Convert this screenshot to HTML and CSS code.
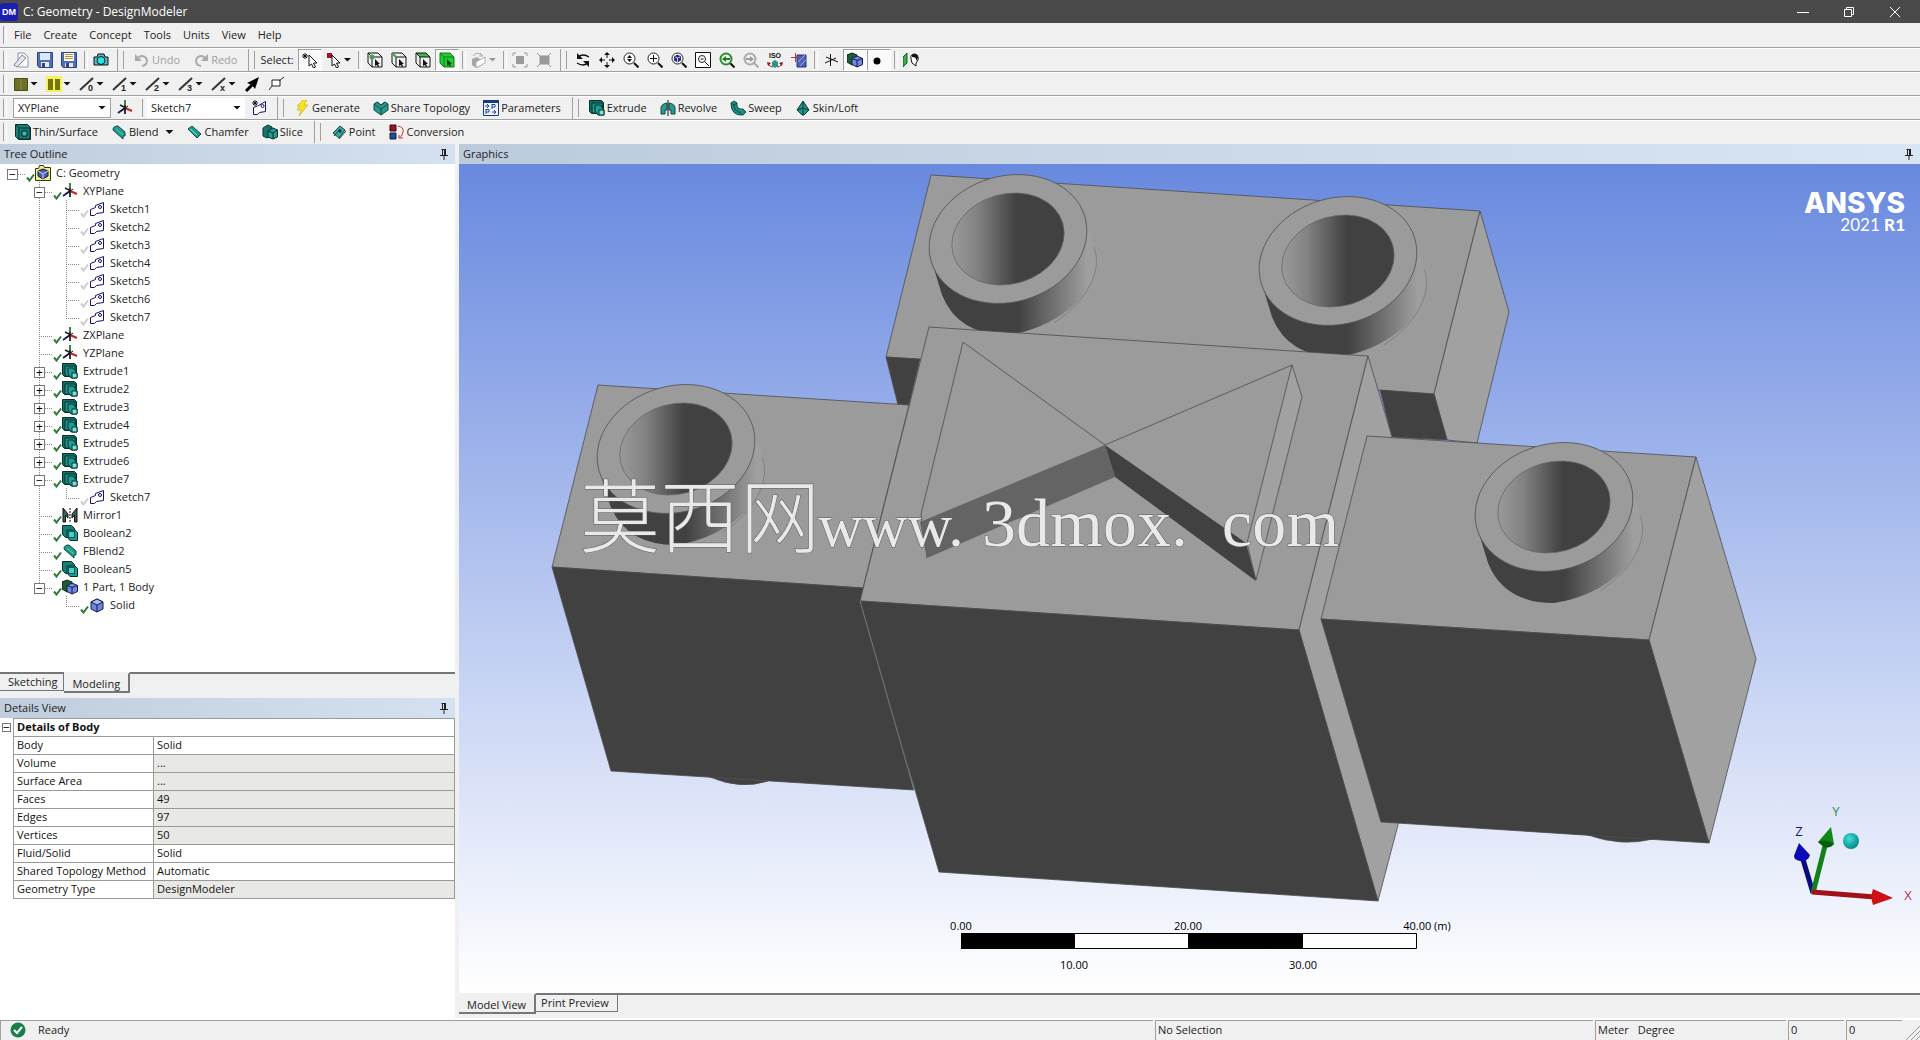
FILE: index.html
```html
<!DOCTYPE html>
<html lang="en">
<head>
<meta charset="utf-8">
<title>C: Geometry - DesignModeler</title>
<link rel="stylesheet" href="styles.css">
</head>
<body>
<svg class="defs" width="0" height="0" aria-hidden="true">
  <defs>
    <symbol id="pin" viewBox="0 0 8 12"><path d="M2.500 1v6M1.500 1.500h4M5 1v6M0 7.500h8M4 8v4" fill="none" stroke="#222"/><path d="M5 1v6" stroke="#222" stroke-width="2"/></symbol>
    <symbol id="check" viewBox="0 0 9 9"><path d="M1 4.500 3.500 7.500 8 1.500" fill="none" stroke="currentColor" stroke-width="2"/></symbol>
    <symbol id="new" viewBox="0 0 16 16"><path d="M5 1h6l4 4v10H5z" fill="#fff" stroke="#8a93a8"/><path d="M1 13 9 3l4 3-9 9z" fill="#e3e5ea" stroke="#7d8494"/></symbol>
    <symbol id="save" viewBox="0 0 16 16"><path d="M.5.5h15v15H2l-1.500-2z" fill="#4f6fb5" stroke="#2d4680"/><path d="M3 1h10v7H3z" fill="#dce7fb"/><path d="M4 10h8v5H4z" fill="#e8e8e8"/><path d="M5 11h3v4H5z" fill="#2d4680"/></symbol>
    <symbol id="saveas" viewBox="0 0 16 16"><path d="M.5.5h15v15H2l-1.500-2z" fill="#4f6fb5" stroke="#2d4680"/><path d="M3 1h10v8H3z" fill="#fff"/><path d="M4 2.500h8M4 4.500h8M4 6.500h8" stroke="#c58a2c"/><path d="M4 11h8v4H4z" fill="#e8e8e8"/><path d="M5 11h3v4H5z" fill="#2d4680"/></symbol>
    <symbol id="camera" viewBox="0 0 16 16"><path d="M1 5h3l1-3h6l1 3h3v8H1z" fill="#5ab8be" stroke="#111"/><circle cx="8" cy="8.500" r="4" fill="#20e6ec" stroke="#111"/></symbol>
    <symbol id="undo" viewBox="0 0 16 16"><path d="M4 6a5 5 0 1 1 4 8" fill="none" stroke="#aaa" stroke-width="2"/><path d="M1 2v7h7z" fill="#aaa"/></symbol>
    <symbol id="redo" viewBox="0 0 16 16"><path d="M12 6a5 5 0 1 0-4 8" fill="none" stroke="#aaa" stroke-width="2"/><path d="M15 2v7H8z" fill="#aaa"/></symbol>
    <symbol id="arrow" viewBox="0 0 16 16"><path d="M7 3v11l2.500-2 2 4 2-1-2-4H15z" fill="#fff" stroke="#111"/></symbol>
    <symbol id="pick" viewBox="0 0 16 16"><path d="M3 1v6M0 4h6M1 2l4 4M5 2 1 6" stroke="#111"/><use href="#arrow"/></symbol>
    <symbol id="pickbox" viewBox="0 0 16 16"><path d="M1 1h5v5H1z" fill="#a01228"/><use href="#arrow" x="-1"/></symbol>
    <symbol id="cubelines" viewBox="0 0 16 16"><path d="M1 1h10l4 4v10H5L1 11zM1 1l4 4h10M5 5v10" fill="none" stroke="#111"/><path d="M8 7v7l2-1 1 2 1-1-1-2h2z" fill="#111"/></symbol>
    <symbol id="selv" viewBox="0 0 16 16"><use href="#cubelines"/><circle cx="5" cy="5" r="2.500" fill="#4a9c4e"/></symbol>
    <symbol id="sele" viewBox="0 0 16 16"><use href="#cubelines"/><path d="m1 1 4 4" stroke="#3da447" stroke-width="2"/></symbol>
    <symbol id="self" viewBox="0 0 16 16"><path d="M1 1h10l4 4H5z" fill="#3fbb4c"/><use href="#cubelines"/></symbol>
    <symbol id="selb" viewBox="0 0 16 16"><path d="M1 1h10l4 4v10H5L1 11z" fill="#22cc36"/><path d="M1 1h10l4 4v10H5L1 11zM1 1l4 4h10M5 5v10" fill="none" stroke="#117a1c"/><path d="M8 7v7l2-1 1 2 1-1-1-2h2z" fill="#093f0d"/></symbol>
    <symbol id="extend" viewBox="0 0 16 16"><path d="m1 7 5-2 4 3v6l-5 2-4-3z" fill="#a5a5a5"/><path d="m5 10 9-5v6l-9 5z" fill="#fff" stroke="#aaa"/><path d="M2 4q4-5 9-1M9 1l3 3H8" fill="none" stroke="#aaa"/></symbol>
    <symbol id="grow" viewBox="0 0 16 16"><path d="M4 4h8v8H4z" fill="#999"/><path d="M1 4V1h3M12 1h3v3M15 12v3h-3M4 15H1v-3" fill="none" stroke="#999"/></symbol>
    <symbol id="shrink" viewBox="0 0 16 16"><path d="M4 4h9v8H4zM1 1l4 4M15 1l-4 4M15 15l-4-4M1 15l4-4" fill="#999" stroke="#999"/></symbol>
    <symbol id="rotate" viewBox="0 0 16 16"><path d="M3 5q5-4 11 0M13 11q-5 4-11 0" fill="none" stroke="#111" stroke-width="1.500"/><path d="M2 1v6h6zM14 15V9H8z" fill="#111"/></symbol>
    <symbol id="pan" viewBox="0 0 16 16"><path d="M8 2v4M8 10v4M2 8h4M10 8h4" stroke="#111"/><path d="m8 0 3 3H5zM8 16l3-3H5zM0 8l3-3v6zM16 8l-3-3v6z" fill="#111"/></symbol>
    <symbol id="lens" viewBox="0 0 16 16"><circle cx="6.500" cy="6.500" r="5.500" fill="#fff" stroke="#222"/><path d="m11 11 4.500 4.500" stroke="#111" stroke-width="2"/></symbol>
    <symbol id="zoom" viewBox="0 0 16 16"><use href="#lens"/><path d="m6.500 3 2.500 3h-5zM6.500 10l2.500-3h-5z" fill="#111"/></symbol>
    <symbol id="zoombox" viewBox="0 0 16 16"><use href="#lens"/><path d="M6.500 3v7M3 6.500h7" stroke="#111"/></symbol>
    <symbol id="zoomfit" viewBox="0 0 16 16"><use href="#lens"/><path d="m6.500 2.500 3.500 2v4l-3.500 2-3.500-2v-4z" fill="#2a2a8c"/><path d="m4 5 2.500 1L9 5M6.500 6v4" stroke="#b6c4ff" fill="none"/></symbol>
    <symbol id="magn" viewBox="0 0 16 16"><path d="M.5.5h15v15H.5z" fill="#fff" stroke="#111"/><circle cx="7" cy="7" r="3.500" fill="none" stroke="#222"/><path d="m10 10 4 4M5.500 7h3" stroke="#111"/></symbol>
    <symbol id="prev" viewBox="0 0 16 16"><path d="m11 11 4.500 4.500" stroke="#111" stroke-width="2"/><circle cx="7" cy="7" r="5.500" fill="#f2fff0" stroke="#2d8a2f" stroke-width="2"/><path d="m3 7 4-3v2h4v2H7v2z" fill="#1e7a22"/></symbol>
    <symbol id="next" viewBox="0 0 16 16"><circle cx="7" cy="7" r="5.500" fill="none" stroke="#aaa" stroke-width="2"/><path d="m11 11 4.500 4.500" stroke="#aaa" stroke-width="2"/><path d="m11 7-4-3v2H3v2h4v2z" fill="#999"/></symbol>
    <symbol id="iso" viewBox="0 0 16 16"><path d="m5 10 3-2 3 2v4l-3 2-3-2z" fill="#1f9a8a"/><path d="M1 12q2 3 5 3M15 12q-2 3-5 3" stroke="#b03030" fill="none"/><path d="m0 10 4 1-3 3zM16 10l-4 1 3 3z" fill="#7b2020"/></symbol>
    <symbol id="lookat" viewBox="0 0 16 16"><path d="M6 3h9v12H6z" fill="#4f65bb" stroke="#253070"/><path d="m7 10 7-7M9 14l6-6" stroke="#9aabec"/><path d="M0 5.500h11M4.500 1v9" stroke="#a03b54"/></symbol>
    <symbol id="plainaxes" viewBox="0 0 16 16"><path d="M7.500 2v12M2 11l11-5M3 5l12 5" stroke="#111"/></symbol>
    <symbol id="plane" viewBox="0 0 16 16"><path d="M8 3v11M3 5l6 3" stroke="#222" stroke-width="1.500"/><path d="M8 0v5" stroke="#3a8a3d" stroke-width="2"/><path d="m1 13 7-5" stroke="#1d1d66" stroke-width="2"/><path d="m8 8 7 3" stroke="#b82a2a" stroke-width="2"/><path d="M8 5v9M4 11l7-5" stroke="#111"/></symbol>
    <symbol id="body" viewBox="0 0 16 16"><path d="m8 2 6 3v7l-6 3-6-3V5z" fill="#6f86dd" stroke="#111b4a"/><path d="m8 2 6 3-6 3-6-3z" fill="#a9b9f7" stroke="#111b4a"/><path d="M8 8v7" stroke="#111b4a"/></symbol>
    <symbol id="parts" viewBox="0 0 16 16"><path d="m0 3 5-2 5 2v7l-5 3-5-3z" fill="#1f5c33" stroke="#0b2413"/><path d="m10 4 5.500 2.500v6L10 15l-5-2.500v-6z" fill="#7189e0" stroke="#111b4a"/><path d="m5 6.500 5 2 5.500-2M10 8.500V15" fill="none" stroke="#111b4a"/></symbol>
    <symbol id="dot" viewBox="0 0 16 16"><circle cx="6" cy="9" r="3.500" fill="#000"/></symbol>
    <symbol id="mate" viewBox="0 0 16 16"><path d="m0 5 4-4v10l-4 4z" fill="#3cab48" stroke="#155c1d"/><path d="M8 6q-1-4 4-4 4 1 3 6l-2 3v3l-4-3-1-4z" fill="#fff" stroke="#111"/><path d="M9 3q5-3 6 3l-2 3q1-4-4-4z" fill="#111"/></symbol>
    <symbol id="facecolor" viewBox="0 0 16 16"><path d="M1.500 2.500h13v12h-13z" fill="#6d7028" stroke="#4b4d18"/><path d="M8 3v11" stroke="#8d9048"/></symbol>
    <symbol id="edgecolor" viewBox="0 0 16 16"><path d="M0 0h16v16H0z" fill="#f6f25a"/><path d="M2 3h5v11H2zM9 3h5v11H9z" fill="#77760d"/></symbol>
    <symbol id="slash" viewBox="0 0 16 16"><path d="M1 14 14 2" stroke="#333" stroke-width="2"/></symbol>
    <symbol id="thick" viewBox="0 0 16 16"><path d="m2 15 7-7" stroke="#000" stroke-width="3"/><path d="M15 1 11 13 8 9 3 7z" fill="#000"/></symbol>
    <symbol id="vertex" viewBox="0 0 16 16"><path d="M4 4h8v6H4z" fill="#fff" stroke="#222"/><path d="m11 5 5-4M1 14l3-4" stroke="#222"/></symbol>
    <symbol id="sketch" viewBox="0 0 16 16"><path d="M1.500 14.500v-6l5-2V4.500l8-3v10l-7 1-2 2z" fill="#fff" stroke="#14146e"/><circle cx="11" cy="6" r="1.500" fill="none" stroke="#14146e"/></symbol>
    <symbol id="newsketch" viewBox="0 0 16 16"><path d="M2.500 14.500v-7l5-2 7-4v10l-6 1-2 2z" fill="#fff" stroke="#14146e"/><circle cx="11.500" cy="6" r="1.500" fill="none" stroke="#14146e"/><path d="M4 0v6M1 3h6M2 1l4 4M6 1 2 5" stroke="#111"/></symbol>
    <symbol id="bolt" viewBox="0 0 16 16"><path d="M9 0h4l-3 5h4L5 16l2-6H3l3-4H3z" fill="#f7e51b" stroke="#b59b08" stroke-width=".5"/></symbol>
    <symbol id="share" viewBox="0 0 16 16"><path d="m1 4 3-2 4 3 4-3 3 2v6l-7 5-7-5z" fill="#2b9a8d" stroke="#0c4a42"/><path d="m1 4 7 5 7-5M8 9v6M4 2l4 3 4-3" fill="none" stroke="#0c4a42"/></symbol>
    <symbol id="params" viewBox="0 0 16 16"><path d="M.5.500h15v15H.5z" fill="#eef3ff" stroke="#173a7a"/><path d="M0 0h16v3H0z" fill="#173a7a"/><path d="M2 6h4M4 4l2 2-2 2M9 4v5M9 4.500h3v2.500H9M3 9v5M3 9.500h3v2.500H3M9 12h4M11 10l2 2-2 2" fill="none" stroke="#1b4696"/></symbol>
    <symbol id="extrude" viewBox="0 0 16 16"><path d="M.5.500h12l2 2v11h-12l-2-2z" fill="#136e66" stroke="#06312d"/><path d="M3 3h10v10H3z" fill="#25938a" stroke="#06312d"/><path d="M6 5h5l4 5v5H9l-3-4z" fill="#1f9e98" stroke="#06312d"/><path d="M10 10h5v5h-5z" fill="#7fdcd6" stroke="#06312d"/></symbol>
    <symbol id="boolean" viewBox="0 0 16 16"><path d="M.5.500h9l3 3v9h-9l-3-3z" fill="#167e74" stroke="#06312d"/><path d="M5 5h8l2.500 2.500v8H8L5 12z" fill="#1e9a90" stroke="#06312d"/><path d="M6.500 6.500h6v6h-6z" fill="#49cfc8" stroke="#0b524b"/></symbol>
    <symbol id="revolve" viewBox="0 0 16 16"><path d="M1 8q0-4 6-5v7H5v4H1zM15 8q0-4-6-5v7h2v4h4z" fill="#2b9a8d" stroke="#0c4a42"/><path d="M8 0v16" stroke="#111"/></symbol>
    <symbol id="sweep" viewBox="0 0 16 16"><path d="M1 3 4 1l3 2q-1 7 6 6l3 3-3 3Q1 16 1 3z" fill="#1d8f82" stroke="#0c4a42"/><path d="m1 3 3 2 3-2M4 5q0 6 7 8" fill="none" stroke="#0c4a42"/></symbol>
    <symbol id="skin" viewBox="0 0 16 16"><path d="m8 1 6 9-5 5H7l-5-5z" fill="#25938a" stroke="#0c3c36"/><path d="m2 10 6-2 6 2M8 1v14" fill="none" stroke="#0c3c36"/></symbol>
    <symbol id="thin" viewBox="0 0 16 16"><path d="M.5.500h12l3 3v12h-12l-3-3z" fill="#1b7d75" stroke="#06312d"/><path d="M4 4h11v11H4zM7 7h5v5H7zM1 1l3 3" fill="none" stroke="#06312d"/><path d="M7 7h5v5H7z" fill="#3fb9b0" stroke="#06312d"/></symbol>
    <symbol id="blend" viewBox="0 0 16 16"><path d="M2 6q0-4 5-4l7 6v4h-2v3z" fill="#1f9c8d" stroke="#0c4a42"/><path d="m5 5 7 6" stroke="#5ccabd"/></symbol>
    <symbol id="chamfer" viewBox="0 0 16 16"><path d="m2 5 4-3 9 8-4 4z" fill="#1f9c8d" stroke="#0c4a42"/><path d="m4 5 7 6" stroke="#8ce0d6"/></symbol>
    <symbol id="slice" viewBox="0 0 16 16"><path d="m1 4 5-3 4 2v8l-5 3-4-2z" fill="#15756b" stroke="#06312d"/><path d="m6 7 5-3 4.500 2v7L11 15l-5-2z" fill="#2b9a8d" stroke="#06312d"/><path d="m6 7 5 2 4.500-3M11 9v6" fill="none" stroke="#06312d"/></symbol>
    <symbol id="point" viewBox="0 0 16 16"><path d="m2 9 7-7 5 4-6 8z" fill="#38a99c" stroke="#0c4a42"/><path d="m3 12 6-7M8 15l7-8" stroke="#133c55"/><circle cx="9" cy="7" r="1.500" fill="#123"/></symbol>
    <symbol id="convert" viewBox="0 0 16 16"><path d="M1 1h6v6H1z" fill="#8f1526" stroke="#3f0710"/><path d="M1 9h6v6H1z" fill="#1d4f8c" stroke="#0a2444"/><path d="M9 2q6 1 5 6-1 5-4 6M10 11v3h4" fill="none" stroke="#c33a3a"/></symbol>
    <symbol id="root" viewBox="0 0 16 16"><path d="M.5 3.500h3l1-3h4l1 2h6v13H.5z" fill="#f1ec8c" stroke="#35330d"/><path d="m8 4 5 2v5l-5 3-5-3V6z" fill="#4960a8" stroke="#0e163c"/><path d="m3 6 5 3 5-3M8 9v5" stroke="#c7d4ff" fill="none"/></symbol>
    <symbol id="mirror" viewBox="0 0 16 16"><path d="M1 15V1l5 6v4L3.500 8v7zM15 15V1l-5 6v4l2.500-3v7z" fill="#3f5f52" stroke="#111"/><path d="M8 1v14" stroke="#111" stroke-dasharray="2 1"/></symbol>
    <linearGradient id="sky" x1="0" y1="0" x2="0" y2="1"><stop offset="0" stop-color="#6889df"/><stop offset=".5" stop-color="#b5c5f0"/><stop offset="1" stop-color="#fff"/></linearGradient>
    <linearGradient id="wall" gradientUnits="userSpaceOnUse" x1="10" y1="0" x2="80" y2="0"><stop offset="0" stop-color="#414141"/><stop offset="1" stop-color="#9f9f9f"/></linearGradient>
    <linearGradient id="bore" gradientUnits="userSpaceOnUse" x1="-56" y1="0" x2="8" y2="0" gradientTransform="rotate(16)"><stop offset="0" stop-color="#9a9a9a"/><stop offset=".4" stop-color="#828282"/><stop offset="1" stop-color="#414141"/></linearGradient>
    <radialGradient id="ball" cx=".4" cy=".35" r=".65"><stop offset="0" stop-color="#3fe0d8"/><stop offset="1" stop-color="#058a86"/></radialGradient>
    <g id="boss">
      <path d="M-76 23 76-23 87 10Q92 40 68 64 40 90 0 96-50 96-66 56z" fill="url(#wall)"/>
      <path d="M86 8Q92 24 84 42 74 66 46 84" fill="none" stroke="#777" stroke-width=".7"/>
      <ellipse rx="80" ry="63" transform="rotate(-16)" fill="#9b9b9b" stroke="#555" stroke-width=".8"/>
      <ellipse rx="57" ry="45" transform="rotate(-16)" fill="url(#bore)" stroke="#666" stroke-width=".7"/>
    </g>
  </defs>
</svg>

<header class="titlebar">
  <svg class="logo" viewBox="0 0 18 18"><rect width="18" height="18" rx="3" fill="#1b1fae"/><text x="9" y="12" text-anchor="middle" class="logo-text">DM</text></svg>
  <h1>C: Geometry - DesignModeler</h1>
  <button class="win" aria-label="Minimize"><svg viewBox="0 0 12 12"><path d="M0 6.500h12" stroke="#fff"/></svg></button>
  <button class="win" aria-label="Restore"><svg viewBox="0 0 12 12"><path d="M1.500 3.500h7v7h-7zM3.500 3V1.500h7v7H9" fill="none" stroke="#fff"/></svg></button>
  <button class="win" aria-label="Close"><svg viewBox="0 0 12 12"><path d="m1 1 10 10M11 1 1 11" stroke="#fff"/></svg></button>
</header>

<nav class="bar menu">
  <span class="grip"></span>
  <button>File</button><button>Create</button><button>Concept</button><button>Tools</button><button>Units</button><button>View</button><button>Help</button>
</nav>

<div class="bar" role="toolbar" aria-label="Standard">
  <span class="grip"></span>
  <button class="ic" aria-label="New"><svg><use href="#new"/></svg></button>
  <button class="ic" aria-label="Save"><svg><use href="#save"/></svg></button>
  <button class="ic" aria-label="Save as"><svg><use href="#saveas"/></svg></button>
  <span class="sep"></span>
  <button class="ic" aria-label="Capture"><svg><use href="#camera"/></svg></button>
  <span class="band"></span>
  <button class="lb" disabled><svg><use href="#undo"/></svg>Undo</button>
  <button class="lb" disabled><svg><use href="#redo"/></svg>Redo</button>
  <span class="band"></span>
  <span class="caption">Select:</span>
  <button class="ic on" aria-label="New selection"><svg><use href="#pick"/></svg></button>
  <button class="ic drop" aria-label="Select mode"><svg><use href="#pickbox"/></svg></button>
  <span class="sep"></span>
  <button class="ic" aria-label="Points"><svg><use href="#selv"/></svg></button>
  <button class="ic" aria-label="Edges"><svg><use href="#sele"/></svg></button>
  <button class="ic" aria-label="Faces"><svg><use href="#self"/></svg></button>
  <button class="ic on" aria-label="Bodies"><svg><use href="#selb"/></svg></button>
  <span class="sep"></span>
  <button class="ic drop" disabled aria-label="Extend selection"><svg><use href="#extend"/></svg></button>
  <span class="sep"></span>
  <button class="ic" disabled aria-label="Expand"><svg><use href="#grow"/></svg></button>
  <button class="ic" disabled aria-label="Shrink"><svg><use href="#shrink"/></svg></button>
  <span class="band"></span>
  <button class="ic" aria-label="Rotate"><svg><use href="#rotate"/></svg></button>
  <button class="ic" aria-label="Pan"><svg><use href="#pan"/></svg></button>
  <button class="ic" aria-label="Zoom"><svg><use href="#zoom"/></svg></button>
  <button class="ic" aria-label="Box zoom"><svg><use href="#zoombox"/></svg></button>
  <button class="ic" aria-label="Zoom to fit"><svg><use href="#zoomfit"/></svg></button>
  <button class="ic" aria-label="Magnifier"><svg><use href="#magn"/></svg></button>
  <button class="ic" aria-label="Previous view"><svg><use href="#prev"/></svg></button>
  <button class="ic" disabled aria-label="Next view"><svg><use href="#next"/></svg></button>
  <button class="ic" aria-label="Isometric view"><svg viewBox="0 0 16 16"><text x="8" y="6" text-anchor="middle" class="iso-text">ISO</text><use href="#iso"/></svg></button>
  <button class="ic" aria-label="Look at"><svg><use href="#lookat"/></svg></button>
  <span class="sep"></span>
  <button class="ic" aria-label="Display plane"><svg><use href="#plainaxes"/></svg></button>
  <button class="ic on" aria-label="Display model"><svg><use href="#parts"/></svg></button>
  <button class="ic on" aria-label="Display points"><svg><use href="#dot"/></svg></button>
  <span class="sep"></span>
  <button class="ic" aria-label="Look at face"><svg><use href="#mate"/></svg></button>
</div>

<div class="bar" role="toolbar" aria-label="Edge display">
  <span class="grip"></span>
  <button class="ic drop" aria-label="Face coloring"><svg><use href="#facecolor"/></svg></button>
  <button class="ic drop" aria-label="Edge coloring"><svg><use href="#edgecolor"/></svg></button>
  <button class="ic drop" aria-label="Free edges"><svg viewBox="0 0 16 16"><use href="#slash"/><text x="9" y="15" class="edge-text">0</text></svg></button>
  <button class="ic drop" aria-label="Single edges"><svg viewBox="0 0 16 16"><use href="#slash"/><text x="9" y="15" class="edge-text">1</text></svg></button>
  <button class="ic drop" aria-label="Double edges"><svg viewBox="0 0 16 16"><use href="#slash"/><text x="9" y="15" class="edge-text">2</text></svg></button>
  <button class="ic drop" aria-label="Triple edges"><svg viewBox="0 0 16 16"><use href="#slash"/><text x="9" y="15" class="edge-text">3</text></svg></button>
  <button class="ic drop" aria-label="Multiple edges"><svg viewBox="0 0 16 16"><use href="#slash"/><text x="9" y="15" class="edge-text">x</text></svg></button>
  <button class="ic" aria-label="Edge direction"><svg><use href="#thick"/></svg></button>
  <button class="ic" aria-label="Vertices"><svg><use href="#vertex"/></svg></button>
</div>

<div class="bar" role="toolbar" aria-label="Plane and features">
  <span class="grip"></span>
  <span class="combo framed"><select aria-label="Active plane"><option>XYPlane</option></select></span>
  <button class="ic wide" aria-label="New plane"><svg><use href="#plane"/></svg></button>
  <span class="sep"></span>
  <span class="combo"><select aria-label="Active sketch"><option>Sketch7</option></select></span>
  <button class="ic wide" aria-label="New sketch"><svg><use href="#newsketch"/></svg></button>
  <span class="band"></span>
  <button class="lb"><svg><use href="#bolt"/></svg>Generate</button>
  <button class="lb"><svg><use href="#share"/></svg>Share Topology</button>
  <button class="lb"><svg><use href="#params"/></svg>Parameters</button>
  <span class="band"></span>
  <button class="lb"><svg><use href="#extrude"/></svg>Extrude</button>
  <button class="lb"><svg><use href="#revolve"/></svg>Revolve</button>
  <button class="lb"><svg><use href="#sweep"/></svg>Sweep</button>
  <button class="lb"><svg><use href="#skin"/></svg>Skin/Loft</button>
</div>

<div class="bar last" role="toolbar" aria-label="Modify">
  <span class="grip"></span>
  <button class="lb"><svg><use href="#thin"/></svg>Thin/Surface</button>
  <button class="lb more"><svg><use href="#blend"/></svg>Blend</button>
  <button class="lb"><svg><use href="#chamfer"/></svg>Chamfer</button>
  <button class="lb"><svg><use href="#slice"/></svg>Slice</button>
  <span class="band"></span>
  <button class="lb"><svg><use href="#point"/></svg>Point</button>
  <button class="lb"><svg><use href="#convert"/></svg>Conversion</button>
</div>

<main class="work">
  <aside class="side">
    <section class="outline">
      <h2 class="head">Tree Outline<svg class="pin"><use href="#pin"/></svg></h2>
      <ul class="tree">
        <li><div class="row"><span class="slot"><button class="box" aria-label="Collapse">−</button></span><svg class="ck"><use href="#check"/></svg><svg class="ti"><use href="#root"/></svg>C: Geometry</div>
          <ul>
            <li><div class="row"><span class="slot"><button class="box" aria-label="Collapse">−</button></span><svg class="ck"><use href="#check"/></svg><svg class="ti"><use href="#plane"/></svg>XYPlane</div>
              <ul>
                <li><div class="row"><span class="slot"></span><svg class="ck dim"><use href="#check"/></svg><svg class="ti"><use href="#sketch"/></svg>Sketch1</div></li>
                <li><div class="row"><span class="slot"></span><svg class="ck dim"><use href="#check"/></svg><svg class="ti"><use href="#sketch"/></svg>Sketch2</div></li>
                <li><div class="row"><span class="slot"></span><svg class="ck dim"><use href="#check"/></svg><svg class="ti"><use href="#sketch"/></svg>Sketch3</div></li>
                <li><div class="row"><span class="slot"></span><svg class="ck dim"><use href="#check"/></svg><svg class="ti"><use href="#sketch"/></svg>Sketch4</div></li>
                <li><div class="row"><span class="slot"></span><svg class="ck dim"><use href="#check"/></svg><svg class="ti"><use href="#sketch"/></svg>Sketch5</div></li>
                <li><div class="row"><span class="slot"></span><svg class="ck dim"><use href="#check"/></svg><svg class="ti"><use href="#sketch"/></svg>Sketch6</div></li>
                <li><div class="row"><span class="slot"></span><svg class="ck dim"><use href="#check"/></svg><svg class="ti"><use href="#sketch"/></svg>Sketch7</div></li>
              </ul>
            </li>
            <li><div class="row"><span class="slot"></span><svg class="ck"><use href="#check"/></svg><svg class="ti"><use href="#plane"/></svg>ZXPlane</div></li>
            <li><div class="row"><span class="slot"></span><svg class="ck"><use href="#check"/></svg><svg class="ti"><use href="#plane"/></svg>YZPlane</div></li>
            <li><div class="row"><span class="slot"><button class="box" aria-label="Expand">+</button></span><svg class="ck"><use href="#check"/></svg><svg class="ti"><use href="#extrude"/></svg>Extrude1</div></li>
            <li><div class="row"><span class="slot"><button class="box" aria-label="Expand">+</button></span><svg class="ck"><use href="#check"/></svg><svg class="ti"><use href="#extrude"/></svg>Extrude2</div></li>
            <li><div class="row"><span class="slot"><button class="box" aria-label="Expand">+</button></span><svg class="ck"><use href="#check"/></svg><svg class="ti"><use href="#extrude"/></svg>Extrude3</div></li>
            <li><div class="row"><span class="slot"><button class="box" aria-label="Expand">+</button></span><svg class="ck"><use href="#check"/></svg><svg class="ti"><use href="#extrude"/></svg>Extrude4</div></li>
            <li><div class="row"><span class="slot"><button class="box" aria-label="Expand">+</button></span><svg class="ck"><use href="#check"/></svg><svg class="ti"><use href="#extrude"/></svg>Extrude5</div></li>
            <li><div class="row"><span class="slot"><button class="box" aria-label="Expand">+</button></span><svg class="ck"><use href="#check"/></svg><svg class="ti"><use href="#extrude"/></svg>Extrude6</div></li>
            <li><div class="row"><span class="slot"><button class="box" aria-label="Collapse">−</button></span><svg class="ck"><use href="#check"/></svg><svg class="ti"><use href="#extrude"/></svg>Extrude7</div>
              <ul><li><div class="row"><span class="slot"></span><svg class="ck dim"><use href="#check"/></svg><svg class="ti"><use href="#sketch"/></svg>Sketch7</div></li></ul>
            </li>
            <li><div class="row"><span class="slot"></span><svg class="ck"><use href="#check"/></svg><svg class="ti"><use href="#mirror"/></svg>Mirror1</div></li>
            <li><div class="row"><span class="slot"></span><svg class="ck"><use href="#check"/></svg><svg class="ti"><use href="#boolean"/></svg>Boolean2</div></li>
            <li><div class="row"><span class="slot"></span><svg class="ck"><use href="#check"/></svg><svg class="ti"><use href="#blend"/></svg>FBlend2</div></li>
            <li><div class="row"><span class="slot"></span><svg class="ck"><use href="#check"/></svg><svg class="ti"><use href="#boolean"/></svg>Boolean5</div></li>
            <li><div class="row"><span class="slot"><button class="box" aria-label="Collapse">−</button></span><svg class="ck"><use href="#check"/></svg><svg class="ti"><use href="#parts"/></svg>1 Part, 1 Body</div>
              <ul><li><div class="row"><span class="slot"></span><svg class="ck"><use href="#check"/></svg><svg class="ti"><use href="#body"/></svg>Solid</div></li></ul>
            </li>
          </ul>
        </li>
      </ul>
      <div class="tabs"><button class="tab">Sketching</button><button class="tab active">Modeling</button><span class="rest"></span></div>
    </section>
    <section class="details">
      <h2 class="head">Details View<svg class="pin"><use href="#pin"/></svg></h2>
      <div class="props">
        <button class="box small" aria-label="Collapse">−</button>
        <table>
          <thead><tr><th colspan="2">Details of Body</th></tr></thead>
          <tbody>
            <tr><td>Body</td><td>Solid</td></tr>
            <tr class="ro"><td>Volume</td><td>...</td></tr>
            <tr class="ro"><td>Surface Area</td><td>...</td></tr>
            <tr class="ro"><td>Faces</td><td>49</td></tr>
            <tr class="ro"><td>Edges</td><td>97</td></tr>
            <tr class="ro"><td>Vertices</td><td>50</td></tr>
            <tr><td>Fluid/Solid</td><td>Solid</td></tr>
            <tr><td>Shared Topology Method</td><td>Automatic</td></tr>
            <tr class="ro"><td>Geometry Type</td><td>DesignModeler</td></tr>
          </tbody>
        </table>
      </div>
    </section>
  </aside>

  <section class="graphics">
    <h2 class="head">Graphics<svg class="pin"><use href="#pin"/></svg></h2>
    <svg class="scene" viewBox="459 164 1461 829" preserveAspectRatio="xMidYMid slice">
      <rect x="0" y="164" width="2400" height="829" fill="url(#sky)"/>
      <g stroke="#4d4d4d" stroke-width=".8" stroke-linejoin="round">
        <path d="M931 175 1480 211 1434 394 886 357z" fill="#9b9b9b"/>
        <path d="M1480 211 1509 312 1477 443 1447 440 1434 394z" fill="#a1a1a1"/>
        <path d="M886 357 920 359 909 405 898 405zM1380 390 1434 394 1447 440 1392 437z" fill="#414141"/>
      </g>
      <use href="#boss" x="1008" y="239"/>
      <use href="#boss" x="1338" y="261"/>
      <g stroke="#4d4d4d" stroke-width=".8" stroke-linejoin="round">
        <path d="M598 385 909 405 863 588 552 567z" fill="#9b9b9b"/>
        <path d="M710 777Q740 790 768 781z" fill="#414141"/>
        <path d="M552 567 863 588 914 790 611 771z" fill="#414141"/>
        <path d="M929 327 1368 356 1299 630 860 601z" fill="#9b9b9b"/>
        <path d="M1368 356 1392 437 1420 720 1398 825 1378 901 1299 630z" fill="#a1a1a1"/>
        <path d="M860 601 1299 630 1378 901 939 872z" fill="#414141"/>
        <path d="M860 601 914 790" stroke="#999" stroke-width=".6"/>
        <path d="M1588 835Q1622 847 1653 839z" fill="#414141"/>
        <path d="M1367 436 1696 457 1649 640 1321 619z" fill="#9b9b9b"/>
        <path d="M1696 457 1756 659 1709 843 1649 640z" fill="#a1a1a1"/>
        <path d="M1321 619 1649 640 1709 843 1381 822z" fill="#414141"/>
        <path d="M963 342 1105 445 1292 365M963 342 921 514 927 558" fill="none"/>
        <path d="M1292 365 1302 397 1256 580 1247 543z" fill="#a1a1a1"/>
      </g>
      <path d="M1105 445 1115 477 927 558 920 522z" fill="#646464"/>
      <path d="M1105 445 1246 543 1256 581 1115 477z" fill="#414141"/>
      <use href="#boss" x="676" y="449"/>
      <use href="#boss" x="1554" y="507"/>
      <g class="mark">
        <text class="mark-cjk" x="580" y="546">莫西网</text>
        <text class="mark-latin" y="546"><tspan class="mark-www" x="818">www.</tspan><tspan x="982">3dmox.</tspan><tspan x="1222">com</tspan></text>
      </g>
      <text class="brand" x="1905" y="213" text-anchor="end">ANSYS</text>
      <text class="release" x="1905" y="231" text-anchor="end">2021 <tspan font-weight="900">R1</tspan></text>
      <path d="M1813 893 1802 856" stroke="#0b0b7c" stroke-width="5"/>
      <path d="M1813 893 1827 838" stroke="#138018" stroke-width="5"/>
      <path d="M1812 892 1875 897" stroke="#a11216" stroke-width="5"/>
      <path d="M1799 843 1810 855Q1808 862 1800 861 1794 860 1794 856z" fill="#0a0ab8"/>
      <path d="M1831 827 1834 844Q1826 850 1818 842z" fill="#0f8a17"/>
      <path d="M1818 842Q1826 838 1834 844 1830 849 1824 847z" fill="#075d0c"/>
      <path d="M1893 898 1873 889Q1870 897 1873 905z" fill="#cf1016"/>
      <circle cx="1851" cy="841" r="8" fill="url(#ball)"/>
      <g class="axis" text-anchor="middle"><text x="1836" y="816" fill="#2f8b4a">Y</text><text x="1799" y="836" fill="#14148c">Z</text><text x="1908" y="900" fill="#c02a56">X</text></g>
      <path d="M961.500 933.500h455v15h-455z" fill="#fff" stroke="#000"/>
      <path d="M961 933h114v16H961zM1188 933h115v16h-115z"/>
      <g class="scale" text-anchor="middle"><text x="961" y="930">0.00</text><text x="1188" y="930">20.00</text><text x="1427" y="930">40.00 (m)</text><text x="1074" y="969">10.00</text><text x="1303" y="969">30.00</text></g>
    </svg>
    <div class="tabs view-tabs"><button class="tab active">Model View</button><button class="tab boxed">Print Preview</button><span class="rest"></span></div>
  </section>
</main>

<footer class="status">
  <span class="cell ready"><svg viewBox="0 0 16 16"><circle cx="8" cy="8" r="7.500" fill="#17804a"/><path d="m4 8 3 3 5-6" fill="none" stroke="#fff" stroke-width="2"/></svg>Ready</span>
  <span class="cell selection">No Selection</span>
  <span class="cell units"><span>Meter</span><span>Degree</span></span>
  <span class="cell num">0</span>
  <span class="cell num">0</span>
  <svg class="resize" viewBox="0 0 16 16"><path d="M2 16 16 2M7 16l9-9M12 16l4-4" stroke="#999"/></svg>
</footer>
</body>
</html>
```
FILE: styles.css
```css
* { box-sizing: border-box; }

body {
  margin: 0;
  height: 100vh;
  display: flex;
  flex-direction: column;
  overflow: hidden;
  background: #f0f0f0;
  color: #222;
  font: 11px/16px "Open Sans", "Noto Sans", sans-serif;
}

.defs { position: absolute; }

button, select {
  font: inherit;
  color: inherit;
  background: none;
  border: 0;
  padding: 0;
  margin: 0;
}

svg { flex: none; display: block; }
h1, h2, ul { margin: 0; padding: 0; font: inherit; list-style: none; }

/* Title bar */
.titlebar {
  height: 23px;
  display: flex;
  align-items: center;
  background: #4a4a4a;
  color: #fff;
}
.titlebar h1 { flex: 1; font-size: 12px; margin-left: 5px; }
.logo { width: 18px; height: 18px; }
.logo-text { font: 700 9px "Liberation Sans", sans-serif; fill: #fff; }
.win { width: 46px; height: 20px; display: grid; place-items: center; }
.win:last-child { margin-right: 2px; }
.win svg { width: 12px; height: 12px; }

/* Menu and toolbars */
.bar {
  height: 24px;
  display: flex;
  align-items: center;
  border-bottom: 1px solid #a0a0a0;
  box-shadow: inset 0 1px #fff;
  white-space: nowrap;
}
.bar.last { border-bottom: 0; }
.menu { height: 25px; box-shadow: none; }
.menu button { padding: 0 6px; }
.menu button:first-of-type { padding-left: 5px; }
.grip, .sep, .band { flex: none; height: 18px; }
.grip { width: 9px; }
.grip::before, .sep::before {
  content: "";
  display: block;
  width: 2px;
  height: 18px;
  margin-left: 3px;
  border-left: 1px solid #a0a0a0;
  border-right: 1px solid #fff;
}
.sep { width: 8px; }
.band { width: 15px; height: 22px; display: flex; align-items: center; padding-left: 4px; }
.band::before, .band::after { content: ""; border-left: 1px solid #a0a0a0; }
.band::before { height: 22px; margin-right: 5px; }
.band::after { height: 18px; }

.ic { width: 24px; height: 22px; display: flex; align-items: center; justify-content: center; }
.ic svg, .lb svg { width: 16px; height: 16px; }
.ic.on { background: #fafafa; border: 1px solid #a0a0a0; border-right-color: #fff; border-bottom-color: #fff; }
.ic.wide { width: 28px; }
.drop { width: 33px; justify-content: flex-start; padding-left: 4px; }
.drop::after, .more::after, .combo::after {
  content: "";
  width: 8px;
  height: 4px;
  background: #111;
  clip-path: polygon(0 0, 100% 0, 50% 100%);
}
.drop::after { margin-left: 1px; }
.drop:disabled::after { background: #999; }
.lb { display: flex; align-items: center; gap: 2px; padding: 0 7px 0 6px; height: 22px; }
.lb:disabled { color: #a0a0a0; }
.lb.more::after { margin-left: 5px; }
.caption { width: 39px; padding-left: 1px; }
.iso-text { font: 700 7px "Liberation Sans", sans-serif; fill: #111; }
.edge-text { font: 700 9px "Liberation Sans", sans-serif; fill: #222; }

.combo {
  width: 98px;
  height: 20px;
  display: grid;
  align-items: center;
  background: #fff;
}
.combo select { appearance: none; grid-area: 1 / 1; width: 100%; padding-left: 4px; outline: 0; }
.combo::after { grid-area: 1 / 1; justify-self: end; margin-right: 4px; pointer-events: none; }
.combo.framed { margin-left: 4px; border: 1px solid #a0a0a0; }

/* Panels */
.work { flex: 1; min-height: 0; display: flex; gap: 4px; border-bottom: 2px solid #fff; }
.side { width: 455px; display: grid; grid-template-rows: minmax(0, 1fr) 320px; }
.outline, .details, .graphics { display: flex; flex-direction: column; min-width: 0; min-height: 0; }
.graphics { flex: 1; }
.head {
  flex: none;
  height: 20px;
  display: flex;
  align-items: center;
  justify-content: space-between;
  padding: 0 7px 0 4px;
  background: linear-gradient(90deg, #bfcddc, #d5e1f0);
}
.graphics .head { background: linear-gradient(90deg, #bccbdb, #d8e5f4); }
.pin { width: 8px; height: 12px; }

.tree { flex: 1; min-height: 0; overflow: hidden; background: #fff; }
.tree ul { padding-left: 27px; }
.tree li { position: relative; }
.tree li li::before {
  content: "";
  position: absolute;
  left: 12px;
  top: 0;
  bottom: 0;
  width: 1px;
  background: repeating-linear-gradient(#888 0 1px, transparent 1px 2px);
}
.tree li li:last-child::before { bottom: auto; height: 10px; }
.row { position: relative; height: 18px; display: flex; align-items: center; line-height: 14px; }
.slot {
  width: 26px;
  height: 18px;
  padding: 5px 0 0 7px;
  background: repeating-linear-gradient(90deg, #888 0 1px, transparent 1px 2px) 12px 10px / 14px 1px no-repeat;
}
.box {
  width: 11px;
  height: 11px;
  display: grid;
  place-items: center;
  border: 1px solid #777;
  background: #fff;
  color: #000;
  font-size: 12px;
  line-height: 9px;
}
.ck { width: 9px; height: 9px; color: #2b7a35; margin-top: 8px; }
.ck.dim { color: #ccc; }
.ti { width: 16px; height: 16px; margin-right: 5px; }

.tabs { flex: none; height: 26px; display: flex; align-items: flex-start; background: #f0f0f0; }
.tab { height: 19px; border-top: 2px solid #777; border-bottom: 1px solid #777; border-right: 1px solid #777; padding: 0 6px 0 8px; }
.tab.active { height: 21px; padding: 2px 8px 0; border-top-color: transparent; border-bottom-width: 2px; border-right-width: 2px; }
.rest { flex: 1; border-top: 2px solid #777; }

.props { flex: 1; display: flex; align-items: flex-start; background: #fff; }
.box.small { flex: none; width: 9px; height: 9px; margin: 5px 2px 0; line-height: 7px; }
table { flex: 1; table-layout: fixed; border-collapse: collapse; color: #111; }
th, td { height: 18px; padding: 0 3px 1px; border: 1px solid #999; line-height: 16px; text-align: left; white-space: nowrap; }
td:first-child { width: 140px; }
th { font-weight: 700; }
.ro td:last-child { background: #e8e8e4; }

/* Viewport */
.scene { flex: 1; width: 100%; min-height: 0; }
.view-tabs { height: 25px; }
.view-tabs .boxed { padding: 0 8px 0 5px; }
.mark { fill: #e9e9e9; stroke: #5a5a5a; stroke-width: 1px; paint-order: stroke; }
.mark-cjk { font: 300 80px "Noto Sans CJK SC", sans-serif; }
.mark-latin { font: 68px "Liberation Serif", serif; }
.mark-www { font-size: 62px; }
.brand { font: 800 28px Inter, sans-serif; fill: #fff; }
.release { font: 17px Lato, sans-serif; fill: #fff; }
.axis { font: 13px "Open Sans", sans-serif; }
.scale { font: 11px "Open Sans", sans-serif; }

/* Status bar */
.status { height: 20px; display: flex; gap: 2px; }
.cell { border-top: 1px solid #a0a0a0; border-left: 1px solid #a0a0a0; padding-left: 2px; line-height: 17px; }
.ready { flex: 1; display: flex; align-items: center; gap: 12px; padding: 0 0 2px 9px; }
.ready svg { width: 16px; height: 16px; }
.selection { width: 438px; }
.units { width: 191px; display: flex; gap: 9px; }
.num { width: 56px; }
.resize { width: 16px; height: 16px; align-self: flex-end; }
```
